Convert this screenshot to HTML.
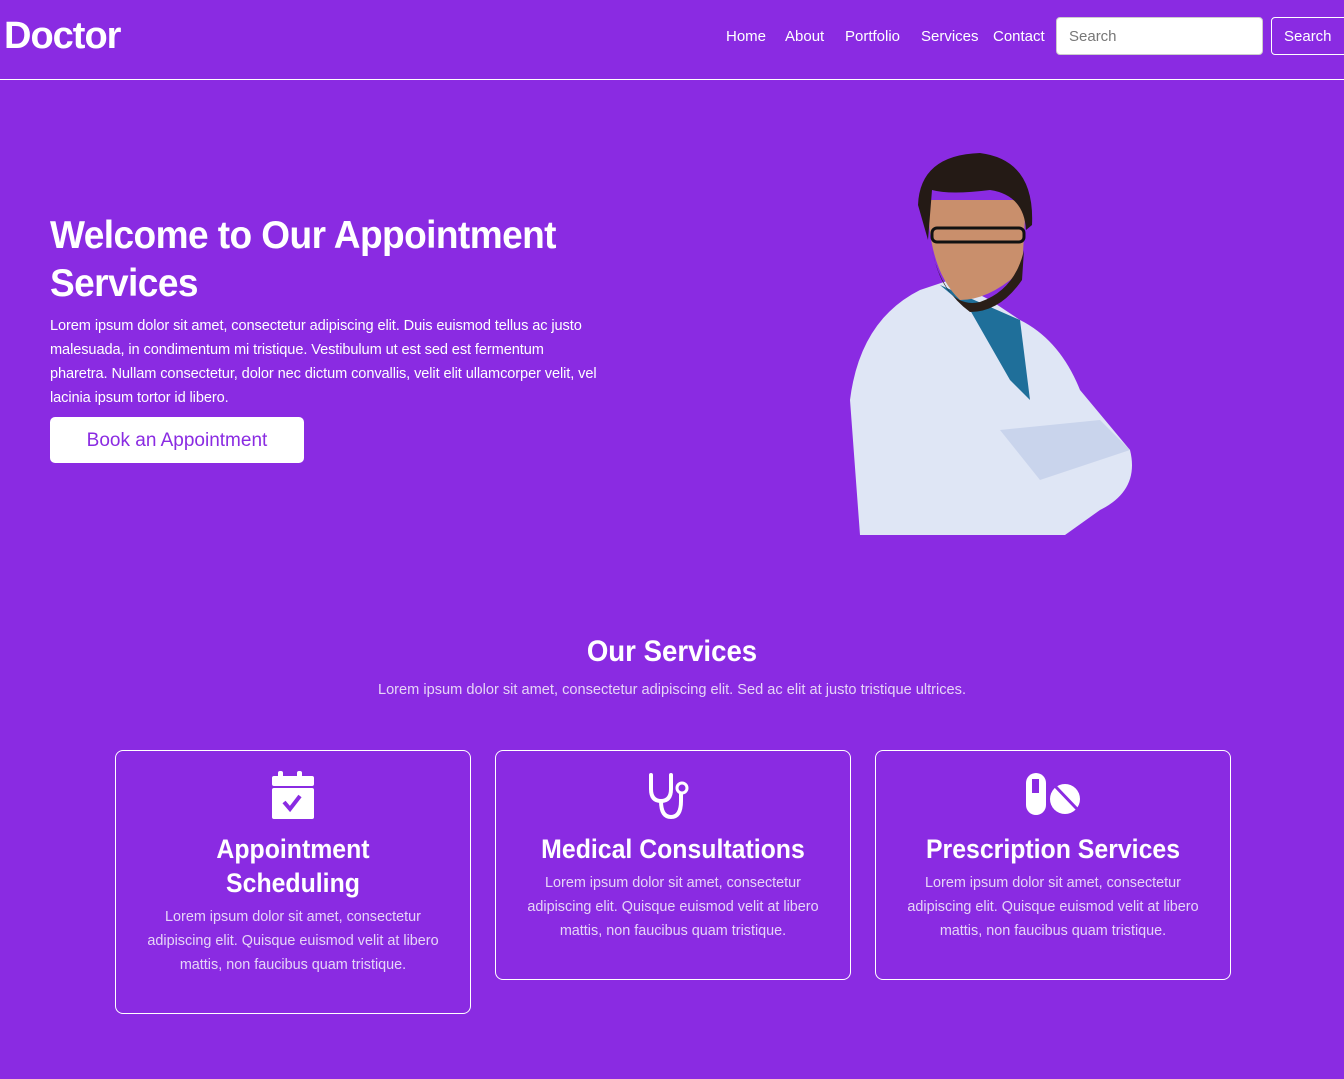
<!DOCTYPE html>
<html><head><meta charset="utf-8"><style>
*{margin:0;padding:0;box-sizing:border-box}
body{width:1344px;height:1079px;background:#8a2be2;font-family:"Liberation Sans",sans-serif;color:#fff;position:relative;overflow:hidden}
.logo{position:absolute;left:4px;top:15px;font-size:38px;font-weight:bold;letter-spacing:-1px}
nav{position:absolute;top:28px;font-size:15px}
nav a{position:absolute;white-space:nowrap}
.search{position:absolute;left:1056px;top:17px;width:207px;height:38px;background:#fff;border-radius:4px;border:1px solid #ccc;color:#777;font-size:15px;padding:10px 12px}
.sbtn{position:absolute;left:1271px;top:17px;width:80px;height:38px;border:1px solid #fff;border-radius:4px;font-size:15px;padding:10px 12px}
.hr{position:absolute;left:0;top:79px;width:1344px;height:1px;background:#fff}
h1{position:absolute;left:50px;top:212px;font-size:39px;line-height:48px;font-weight:bold;letter-spacing:-0.6px;transform:scaleX(0.95);transform-origin:left}
.lead{position:absolute;left:50px;top:314px;width:555px;font-size:14.6px;line-height:24px;letter-spacing:-0.1px}
.book{position:absolute;left:50px;top:417px;width:254px;height:46px;background:#fff;border-radius:5px;color:#8a2be2;font-size:19px;text-align:center;line-height:48px}
h2{position:absolute;left:0;width:1344px;text-align:center;top:635px;font-size:30px;font-weight:bold;transform:scaleX(0.92)}
.sub{position:absolute;left:0;width:1344px;text-align:center;top:682px;font-size:14.6px;color:#e6d5f7}
.card{position:absolute;top:750px;width:356px;border:1px solid #fff;border-radius:8px;text-align:center;padding:20px 30px}
.card h3{font-size:27px;font-weight:bold;line-height:34px;margin-top:8px;transform:scaleX(0.92);white-space:nowrap}
.card p{font-size:14.4px;line-height:24px;color:#e6d5f7;margin-top:5px}
</style></head><body>
<div class="logo">Doctor</div>
<nav><a style="left:726px">Home</a><a style="left:785px">About</a><a style="left:845px">Portfolio</a><a style="left:921px">Services</a><a style="left:993px">Contact</a></nav>
<div class="search">Search</div><div class="sbtn">Search</div>
<div class="hr"></div>
<h1>Welcome to Our Appointment<br>Services</h1>
<div class="lead">Lorem ipsum dolor sit amet, consectetur adipiscing elit. Duis euismod tellus ac justo malesuada, in condimentum mi tristique. Vestibulum ut est sed est fermentum pharetra. Nullam consectetur, dolor nec dictum convallis, velit elit ullamcorper velit, vel lacinia ipsum tortor id libero.</div>
<div class="book">Book an Appointment</div>
<svg style="position:absolute;left:840px;top:150px" width="310" height="390" viewBox="0 0 310 390">
<path d="M20 385 L10 250 Q20 170 80 140 L110 130 L150 150 L180 170 Q220 190 240 240 L290 300 Q300 340 260 360 L225 385 Z" fill="#dfe6f5"/>
<path d="M100 135 L130 160 L170 230 L190 250 L180 170 Z" fill="#1f6f9a"/>
<path d="M88 50 Q88 120 120 150 Q150 150 182 120 L186 50 Z" fill="#c98f6c"/>
<path d="M92 100 Q105 160 140 152 Q175 140 184 100 L182 130 Q160 162 130 162 Q100 140 92 100Z" fill="#2a1e18"/>
<path d="M78 55 Q80 5 140 3 Q195 10 192 75 L186 80 Q184 45 150 40 Q110 45 92 40 L88 90 Z" fill="#241a15"/>
<rect x="92" y="78" width="92" height="14" rx="5" fill="none" stroke="#111" stroke-width="3"/>
<path d="M160 280 L260 270 L290 300 L200 330 Z" fill="#c9d4ec"/>
</svg>
<h2>Our Services</h2>
<div class="sub">Lorem ipsum dolor sit amet, consectetur adipiscing elit. Sed ac elit at justo tristique ultrices.</div>
<div class="card" style="left:115px;height:264px">
<svg width="44" height="48" viewBox="0 0 44 48"><rect x="7" y="0" width="5" height="9" rx="2" fill="#fff"/><rect x="26" y="0" width="5" height="9" rx="2" fill="#fff"/><rect x="1" y="5" width="42" height="10" rx="2" fill="#fff"/><rect x="1" y="17" width="42" height="31" rx="2" fill="#fff"/><path d="M13 31 L19 38 L29 25" stroke="#8a2be2" stroke-width="4" fill="none"/></svg>
<h3>Appointment<br>Scheduling</h3>
<p>Lorem ipsum dolor sit amet, consectetur adipiscing elit. Quisque euismod velit at libero mattis, non faucibus quam tristique.</p></div>
<div class="card" style="left:495px;height:230px">
<svg width="52" height="48" viewBox="0 0 52 48"><path d="M4 4 V18 Q4 30 14 30 Q24 30 24 18 V4" stroke="#fff" stroke-width="4" fill="none" stroke-linecap="round"/><path d="M14 30 Q14 46 24 46 Q34 46 34 30 V22" stroke="#fff" stroke-width="4" fill="none"/><circle cx="35" cy="17" r="5" stroke="#fff" stroke-width="3" fill="none"/></svg>
<h3>Medical Consultations</h3>
<p>Lorem ipsum dolor sit amet, consectetur adipiscing elit. Quisque euismod velit at libero mattis, non faucibus quam tristique.</p></div>
<div class="card" style="left:875px;height:230px">
<svg width="56" height="48" viewBox="0 0 56 48"><rect x="1" y="2" width="20" height="42" rx="10" fill="#fff"/><rect x="7" y="8" width="7" height="14" fill="#8a2be2"/><circle cx="40" cy="28" r="15" fill="#fff"/><path d="M30 15 L52 38" stroke="#8a2be2" stroke-width="3"/></svg>
<h3>Prescription Services</h3>
<p>Lorem ipsum dolor sit amet, consectetur adipiscing elit. Quisque euismod velit at libero mattis, non faucibus quam tristique.</p></div>
</body></html>
